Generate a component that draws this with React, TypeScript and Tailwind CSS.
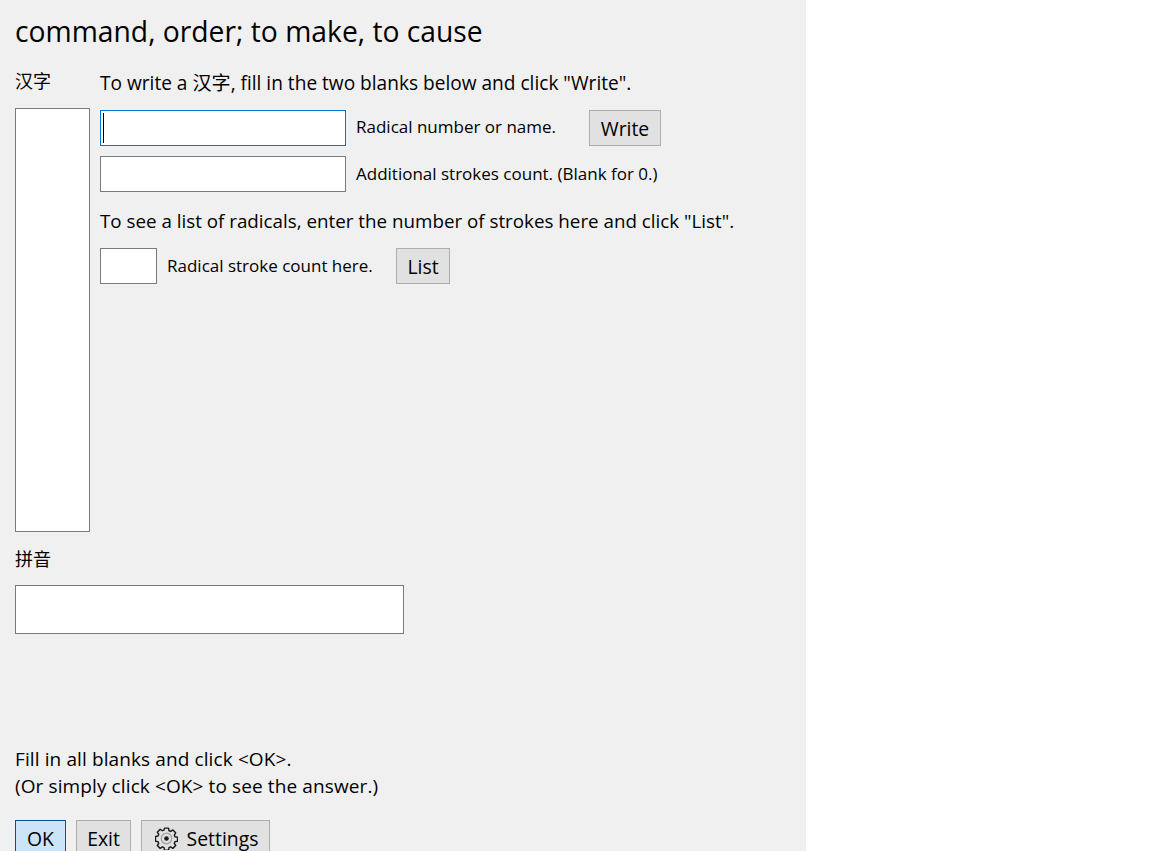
const FONT = "font-['Open_Sans','Noto_Sans_CJK_SC',sans-serif]";

// eight rounded teeth around the hub, same proportions as the Windows settings glyph
const GEAR_PATH =
  "M9.9 1.2h4.2l.5 2.7c.6.2 1.2.4 1.700.700l2.300-1.500 3 3-1.500 2.300c.3.5.5 1.100.7 1.700l2.700.5v4.200l-2.700.5c-.2.6-.4 1.200-.7 1.700l1.500 2.300-3 3-2.300-1.500c-.5.3-1.100.5-1.700.7l-.5 2.700H9.900l-.5-2.700c-.6-.2-1.200-.4-1.700-.7l-2.300 1.500-3-3 1.500-2.300c-.3-.5-.5-1.100-.7-1.700l-2.700-.5V9.900l2.700-.5c.2-.6.4-1.200.7-1.700L2.400 5.400l3-3 2.300 1.500c.5-.3 1.100-.5 1.700-.7z";

const GearIcon = () => (
  <svg width="23" height="23" viewBox="0 0 24 24" fill="none" className="shrink-0">
    <path d={GEAR_PATH} stroke="#1a1a1a" strokeWidth="1.500" strokeLinejoin="round" />
    <circle cx="12" cy="12" r="5.500" stroke="#a0a0a0" strokeWidth="1.300" />
    <circle cx="12" cy="12" r="2.400" fill="#1a1a1a" />
  </svg>
);

const ActionButton = ({ children, className }: { children: React.ReactNode; className: string }) => (
  <button
    type="button"
    className={`flex h-[36px] shrink-0 items-center justify-center pt-px text-[19.4px] text-black ${className}`}
  >
    {children}
  </button>
);

const App = () => {
  return (
    <div className={`${FONT} h-[851px] w-[1152px] overflow-hidden bg-white text-black`}>
      <main className="h-[851px] w-[806px] bg-[#f0f0f0] pl-[15px]">
        <h1 className="h-[51px] pt-[11px] text-[28.25px] leading-[41px]">command, order; to make, to cause</h1>

        <div className="mt-[21px] flex gap-[10px]">
          <section className="flex w-[75px] flex-col">
            <span className="h-[36px] text-[18px] leading-[18px]">汉字</span>
            <div className="h-[424px] w-[75px] border border-[#7a7a7a] bg-white" />
          </section>

          <section className="flex flex-col">
            <p className="h-[38px] text-[19.1px] leading-[22px]">To write a 汉字, fill in the two blanks below and click "Write".</p>

            <div className="flex h-[36px] items-center">
              <div className="relative">
                <input className="block h-[36px] w-[246px] border border-[#0078d7] bg-white outline-none" />
                <span className="absolute left-[3px] top-[3px] h-[30px] w-px bg-black" />
              </div>
              <span className="mb-[2px] ml-[10px] w-[233px] text-[17px]">Radical number or name.</span>
              <ActionButton className="w-[72px] border border-[#adadad] bg-[#e1e1e1]">Write</ActionButton>
            </div>

            <div className="mt-[10px] flex h-[36px] items-center">
              <input className="block h-[36px] w-[246px] border border-[#7a7a7a] bg-white outline-none" />
              <span className="ml-[10px] text-[17px]">Additional strokes count. (Blank for 0.)</span>
            </div>

            <p className="mt-[16px] h-[40px] text-[18.8px] leading-[26px]">To see a list of radicals, enter the number of strokes here and click "List".</p>

            <div className="flex h-[36px] items-center">
              <input className="block h-[36px] w-[57px] border border-[#7a7a7a] bg-white outline-none" />
              <span className="mb-px ml-[10px] w-[229px] text-[17px]">Radical stroke count here.</span>
              <ActionButton className="w-[54px] border border-[#adadad] bg-[#e1e1e1]">List</ActionButton>
            </div>
          </section>
        </div>

        <div className="mt-[17px] h-[36px] text-[18px] leading-[20px]">拼音</div>
        <input className="block h-[49px] w-[389px] border border-[#7a7a7a] bg-white outline-none" />

        <p className="mt-[112px] text-[19px] leading-[27px] tracking-[0.11px]">
          Fill in all blanks and click &lt;OK&gt;.
          <br />
          (Or simply click &lt;OK&gt; to see the answer.)
        </p>

        <div className="mt-[20px] flex gap-[10px]">
          <ActionButton className="w-[51px] border border-[#005499] bg-[#cce4f7]">OK</ActionButton>
          <ActionButton className="w-[55px] border border-[#adadad] bg-[#e1e1e1]">Exit</ActionButton>
          <ActionButton className="w-[129px] gap-[9px] border border-[#adadad] bg-[#e1e1e1] pl-[2px]">
            <GearIcon />
            Settings
          </ActionButton>
        </div>
      </main>
    </div>
  );
};

export default App;
